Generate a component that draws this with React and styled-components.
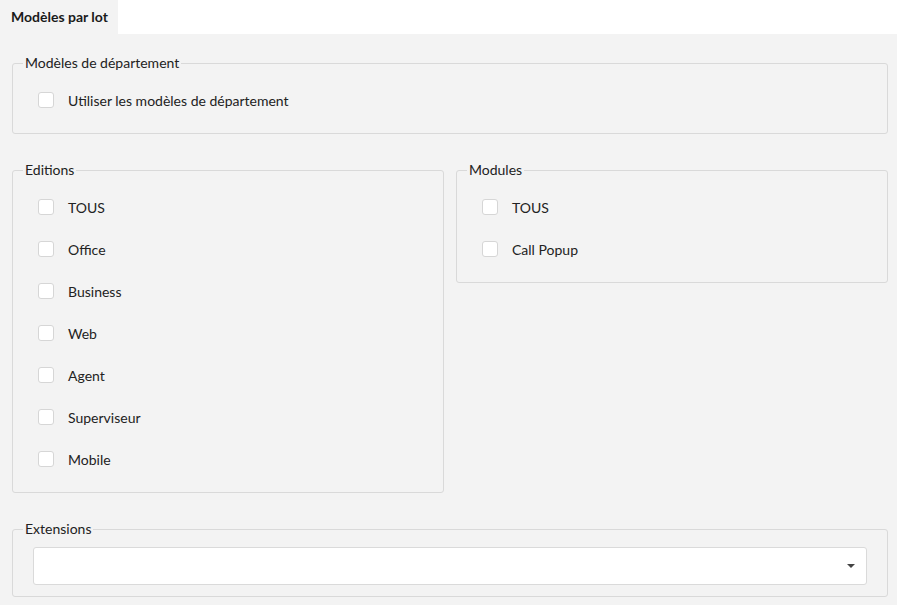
import React, { useState } from 'react'
import styled, { createGlobalStyle } from 'styled-components';

const GlobalStyle = createGlobalStyle`
  html, body {
    margin: 0;
    padding: 0;
    background: #ffffff;
  }
  body {
    font-family: 'Lato', 'Liberation Sans', sans-serif;
    color: #222;
  }
  * { box-sizing: border-box; }
`;

const editions = ['TOUS', 'Office', 'Business', 'Web', 'Agent', 'Superviseur', 'Mobile'];
const modules = ['TOUS', 'Call Popup'];

function CheckRow({ label, checked, onToggle }) {
    return (
        <Row onClick={onToggle}>
            <Box $checked={checked} />
            <Label>{label}</Label>
        </Row>
    )
}

function CheckGroup({ title, items, values, onToggle }) {
    return (
        <Group>
            <Legend>{title}</Legend>
            <GroupBody>
                {items.map((item) => (
                    <CheckRow
                        key={item}
                        label={item}
                        checked={!!values[title + item]}
                        onToggle={() => onToggle(title + item)}
                    />
                ))}
            </GroupBody>
        </Group>
    )
}

function App() {
    const [values, setValues] = useState({});
    const toggle = (key) => setValues({ ...values, [key]: !values[key] });

    return (
        <Page>
            <GlobalStyle />
            <TabBar>
                <Tab $active>Modèles par lot</Tab>
            </TabBar>
            <Panel>
                <CheckGroup
                    title="Modèles de département"
                    items={['Utiliser les modèles de département']}
                    values={values}
                    onToggle={toggle}
                />
                <Columns>
                    <CheckGroup title="Editions" items={editions} values={values} onToggle={toggle} />
                    <CheckGroup title="Modules" items={modules} values={values} onToggle={toggle} />
                </Columns>
                <Group>
                    <Legend>Extensions</Legend>
                    <SelectBody>
                        <Select>
                            <Caret />
                        </Select>
                    </SelectBody>
                </Group>
            </Panel>
        </Page>
    )
}

const Page = styled.div`
  width: 897px;
  height: 605px;
  display: flex;
  flex-direction: column;
  overflow: hidden;
`;

const TabBar = styled.div`
  height: 34px;
  display: flex;
  background: #ffffff;
`;

const Tab = styled.div`
  height: 34px;
  padding: 0 10px 2px 11px;
  display: flex;
  align-items: center;
  font-size: 14px;
  font-weight: 700;
  color: #1a1a1a;
  background: ${(p) => (p.$active ? '#f3f3f3' : 'transparent')};
`;

const Panel = styled.div`
  flex: 1;
  background: #f3f3f3;
  padding: 21px 9px 0 12px;
  display: flex;
  flex-direction: column;
  gap: 28px;
`;

const Columns = styled.div`
  display: grid;
  grid-template-columns: 1fr 1fr;
  gap: 12px;
  align-items: start;
`;

const Group = styled.fieldset`
  margin: 0;
  min-width: 0;
  padding: 0 10px;
  border: 1px solid #d9d9d9;
  border-radius: 3px;
`;

const Legend = styled.legend`
  padding: 0 2px 1px;
  font-size: 14px;
  line-height: 16px;
  color: #222;
`;

const GroupBody = styled.div`
  padding: 7px 15px 12px;
  display: flex;
  flex-direction: column;
`;

const Row = styled.div`
  height: 42px;
  display: flex;
  align-items: center;
  gap: 14px;
  cursor: pointer;
`;

const Box = styled.span`
  width: 16px;
  height: 16px;
  flex-shrink: 0;
  background: ${(p) => (p.$checked ? '#3d7bd9' : '#ffffff')};
  border: 1px solid #d6d6d6;
  border-radius: 3px;
`;

const Label = styled.span`
  font-size: 14px;
  color: #222;
`;

const SelectBody = styled.div`
  padding: 9px 10px 11px;
`;

const Select = styled.div`
  height: 38px;
  background: #ffffff;
  border: 1px solid #dadada;
  border-radius: 3px;
  display: flex;
  align-items: center;
  justify-content: flex-end;
  padding-right: 11px;
`;

const Caret = styled.span`
  width: 0;
  height: 0;
  border-left: 4px solid transparent;
  border-right: 4px solid transparent;
  border-top: 4px solid #444;
`;

export default App
